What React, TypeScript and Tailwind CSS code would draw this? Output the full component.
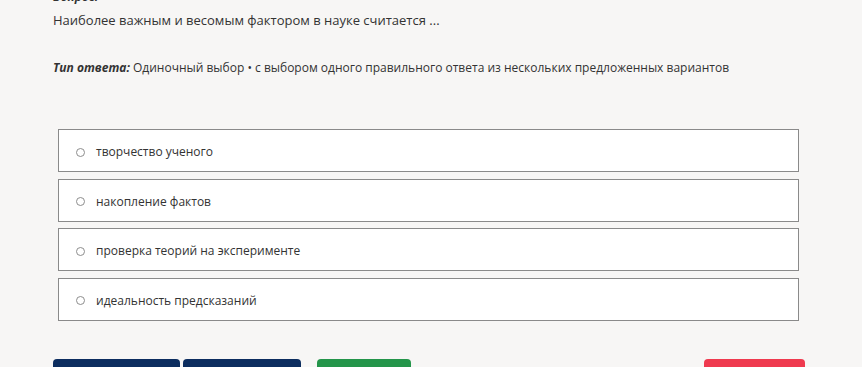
const options = [
  'творчество ученого',
  'накопление фактов',
  'проверка теорий на эксперименте',
  'идеальность предсказаний'
];

function Option({ label }: { label: string }) {
  return (
    <label className="flex items-center h-[43px] border border-[#8a8a8a] bg-white pl-[17px] pt-[3px] cursor-pointer">
      <span className="w-[9px] h-[9px] rounded-full border border-[#8d8d8d] bg-white mr-[11px]" />
      <span className="text-[12px] text-[#333]">{label}</span>
    </label>
  );
}

export default function App() {
  return (
    <div
      className="w-[862px] h-[367px] overflow-hidden bg-[#f7f6f5] text-[#333]"
      style={{ fontFamily: '"Open Sans", "Noto Sans", sans-serif' }}
    >
      <div className="px-[53px]">
        <div className="-mt-[12px] text-[12px] font-bold italic leading-[18px]">Вопрос:</div>
        <div className="mt-[5px] text-[13px] leading-[18px]">
          Наиболее важным и весомым фактором в науке считается ...
        </div>
        <div className="mt-[30px] text-[12px] leading-[18px]">
          <span className="font-bold italic">Тип ответа:</span> Одиночный выбор • с выбором одного
          правильного ответа из нескольких предложенных вариантов
        </div>
        <div className="mt-[52px] ml-[5px] w-[741px] flex flex-col gap-[6.5px]">
          {options.map(o => (
            <Option key={o} label={o} />
          ))}
        </div>
        <div className="mt-[38px] flex">
          <div className="w-[127px] h-[30px] rounded-t-[4px] bg-[#0c2d5f]" />
          <div className="ml-[3px] w-[118px] h-[30px] rounded-t-[4px] bg-[#0c2d5f]" />
          <div className="ml-[16px] w-[94px] h-[30px] rounded-t-[4px] bg-[#24954a]" />
          <div className="ml-[293px] w-[101px] h-[30px] rounded-t-[4px] bg-[#ef3a4f]" />
        </div>
      </div>
    </div>
  );
}
